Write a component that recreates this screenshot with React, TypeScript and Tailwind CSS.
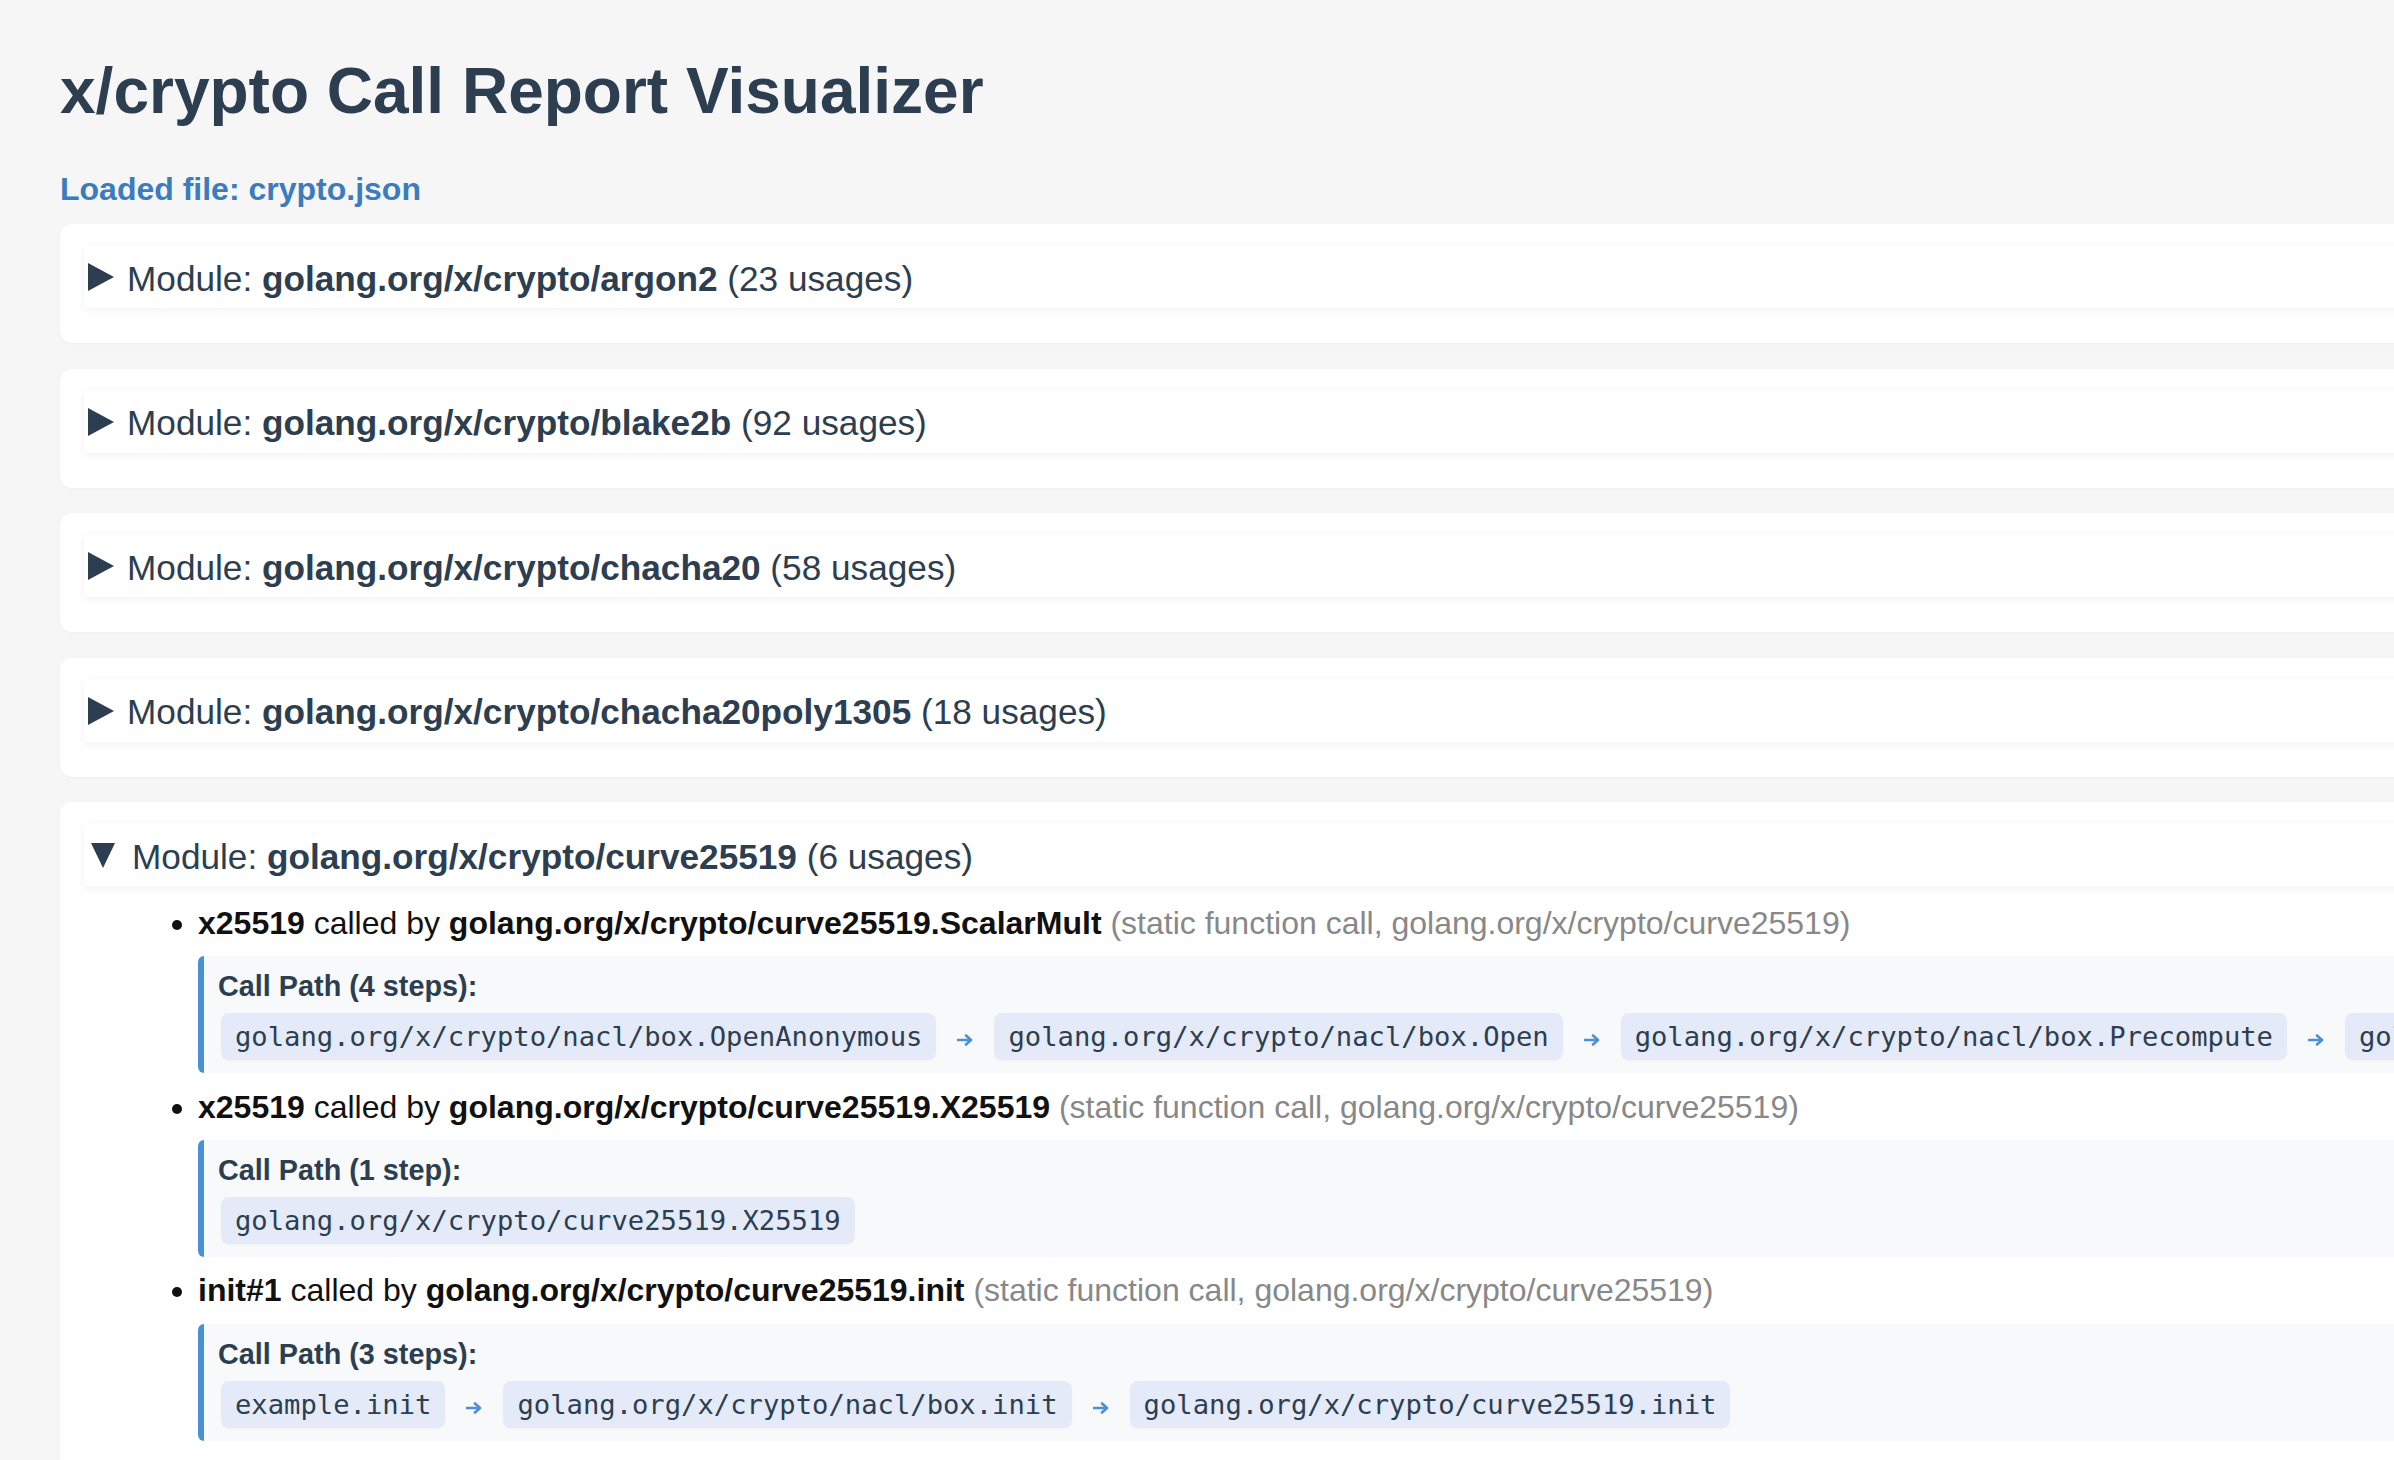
import React from "react";

type Call = {
  fn: string;
  caller: string;
  kind: string;
  path: string[];
};

const modules = [
  { id: 1, name: "golang.org/x/crypto/argon2", usages: 23 },
  { id: 2, name: "golang.org/x/crypto/blake2b", usages: 92 },
  { id: 3, name: "golang.org/x/crypto/chacha20", usages: 58 },
  { id: 4, name: "golang.org/x/crypto/chacha20poly1305", usages: 18 },
];

const curveCalls: Call[] = [
  {
    fn: "x25519",
    caller: "golang.org/x/crypto/curve25519.ScalarMult",
    kind: "(static function call, golang.org/x/crypto/curve25519)",
    path: [
      "golang.org/x/crypto/nacl/box.OpenAnonymous",
      "golang.org/x/crypto/nacl/box.Open",
      "golang.org/x/crypto/nacl/box.Precompute",
      "golang.org/x/crypto/curve25519.ScalarMult",
    ],
  },
  {
    fn: "x25519",
    caller: "golang.org/x/crypto/curve25519.X25519",
    kind: "(static function call, golang.org/x/crypto/curve25519)",
    path: ["golang.org/x/crypto/curve25519.X25519"],
  },
  {
    fn: "init#1",
    caller: "golang.org/x/crypto/curve25519.init",
    kind: "(static function call, golang.org/x/crypto/curve25519)",
    path: [
      "example.init",
      "golang.org/x/crypto/nacl/box.init",
      "golang.org/x/crypto/curve25519.init",
    ],
  },
];

function Arrow() {
  return (
    <svg width="16" height="12" viewBox="0 0 16 12" className="mx-[21px] mt-[7px] shrink-0">
      <path d="M1 6 H13" stroke="#4a90d9" strokeWidth="2.6" strokeLinecap="round" />
      <path d="M9 1.5 L14 6 L9 10.5" stroke="#4a90d9" strokeWidth="2.6" fill="none" strokeLinecap="round" strokeLinejoin="round" />
    </svg>
  );
}

function CallPath({ path }: { path: string[] }) {
  return (
    <div className="mt-[14.7px] mb-[15.5px] border-l-[6px] border-[#4a90d9] rounded-[6px] bg-[#f7f9fb] pl-[14px] pt-[14px] pb-[13.3px]">
      <div className="text-[28.8px] font-bold text-[#2c3e50] leading-[normal] mb-[9.4px]">
        Call Path ({path.length} {path.length === 1 ? "step" : "steps"}):
      </div>
      <div className="flex items-center ml-[3px]">
        {path.map((step, i) => (
          <React.Fragment key={i}>
            {i > 0 && <Arrow />}
            <span className="shrink-0 bg-[#e4eaf8] rounded-[8px] px-[14px] py-[8px] font-['DejaVu_Sans_Mono',monospace] text-[27.2px] leading-[normal] text-[#2c3e50] whitespace-nowrap shadow-[0_1px_2px_rgba(0,0,0,0.03)]">
              {step}
            </span>
          </React.Fragment>
        ))}
      </div>
    </div>
  );
}

function ModuleCard({
  name,
  usages,
  open,
  children,
}: {
  name: string;
  usages: number;
  open?: boolean;
  children?: React.ReactNode;
}) {
  return (
    <div className="bg-white rounded-[12px] px-[24px] pt-[21px] pb-[35px] mb-[25.5px] shadow-[0_1px_3px_rgba(0,0,0,0.03)]">
      <div className="h-[63px] flex items-start pl-[4px] pt-[13.6px] bg-white shadow-[0_2px_8px_rgba(0,0,0,0.06)] text-[35.2px] leading-[normal] text-[#2c3e50] whitespace-nowrap">
        {open ? (
          <svg width="24" height="25" viewBox="0 0 24 25" className="ml-[3px] mr-[17px] mt-[6px] shrink-0">
            <polygon points="0,0 24,0 12,25" fill="#2c3e50" />
          </svg>
        ) : (
          <svg width="26" height="28" viewBox="0 0 26 28" className="mr-[13px] mt-[4.4px] shrink-0">
            <polygon points="0,0 26,14 0,28" fill="#2c3e50" />
          </svg>
        )}
        <span>
          Module: <b>{name}</b> ({usages} usages)
        </span>
      </div>
      {children}
    </div>
  );
}

export default function App() {
  return (
    <div className="h-screen w-screen overflow-hidden bg-[#f6f6f6]">
      <div className="w-max min-w-full pl-[60px] pt-[54px] font-['Liberation_Sans',Arial,sans-serif]">
        <h1 className="text-[64px] leading-[74px] font-bold text-[#2c3e50] mb-[42.5px]">
          x/crypto Call Report Visualizer
        </h1>
        <p className="text-[32px] leading-[normal] font-bold text-[#3b7bbf] mb-[16.7px]">
          Loaded file: crypto.json
        </p>

        {modules.map((m) => (
          <ModuleCard key={m.id} name={m.name} usages={m.usages} />
        ))}

        <ModuleCard name="golang.org/x/crypto/curve25519" usages={6} open>
          <ul className="mt-[18.5px] pl-[114px]">
            {curveCalls.map((c, i) => (
              <li key={i}>
                <div className="flex items-center text-[32px] leading-[normal] text-[#111] whitespace-nowrap">
                  <span className="-ml-[26px] mr-[16px] mt-[3px] w-[10px] h-[10px] rounded-full bg-[#111] shrink-0"></span>
                  <span>
                    <b>{c.fn}</b> called by <b>{c.caller}</b>{" "}
                    <span className="text-[#888]">{c.kind}</span>
                  </span>
                </div>
                <CallPath path={c.path} />
              </li>
            ))}
          </ul>
        </ModuleCard>
      </div>
    </div>
  );
}
